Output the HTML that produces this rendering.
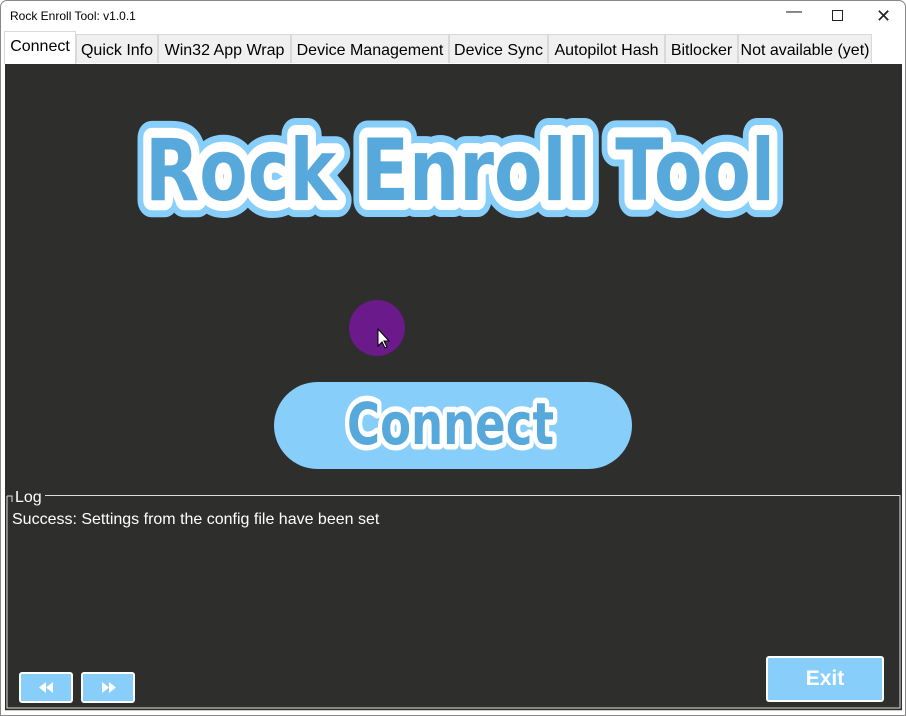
<!DOCTYPE html>
<html><head><style>
body{margin:0;width:906px;height:716px;background:#fff;font-family:"Liberation Sans",Arial,sans-serif;position:relative;overflow:hidden}
.win{position:absolute;left:0;top:0;width:904px;height:714px;border:1px solid #888;border-radius:7px 7px 0 0;background:#fff}
.title{position:absolute;left:9px;top:8px;font-size:12px;color:#000}
.ctl{position:absolute;top:4px;font-size:16px;color:#222}
.tabs{position:absolute;top:33px;left:0;height:31px;width:906px}
.tab{position:absolute;top:1px;height:29px;background:#f0f0f0;border:1px solid #d9d9d9;border-bottom:none;font-size:16px;line-height:31px;text-align:center;color:#000;box-sizing:border-box}
.tab.sel{background:#fff;top:-2px;height:33px;line-height:30px;border-color:#d9d9d9}
.main{position:absolute;left:5px;top:64px;width:897px;height:647px;background:#2e2e2d}
.btn{position:absolute;background:#87cefa;border:2px solid #fff;border-radius:3px;box-sizing:border-box}
</style></head><body>
<div class="win">
<div class="title">Rock Enroll Tool: v1.0.1</div>
<div class="ctl" style="left:785px;top:2px">—</div>
<div style="position:absolute;left:831px;top:9px;width:9px;height:9px;border:1px solid #222"></div>
<div class="ctl" style="left:875px;top:5px;font-size:18px">✕</div>
</div>
<div class="tabs">
<div class="tab" style="left:76px;width:82px">Quick Info</div>
<div class="tab" style="left:158px;width:133px">Win32 App Wrap</div>
<div class="tab" style="left:291px;width:158px">Device Management</div>
<div class="tab" style="left:449px;width:99px">Device Sync</div>
<div class="tab" style="left:548px;width:117px">Autopilot Hash</div>
<div class="tab" style="left:665px;width:73px">Bitlocker</div>
<div class="tab" style="left:738px;width:134px">Not available (yet)</div>
<div class="tab sel" style="left:4px;width:72px">Connect</div>
</div>
<div class="main"></div>
<svg style="position:absolute;left:0;top:0" width="906" height="716">
<g font-family="DejaVu Sans,sans-serif" font-weight="bold" font-size="86" stroke-linejoin="round">
<text x="145" y="200" textLength="630" lengthAdjust="spacingAndGlyphs" fill="#87cefa" stroke="#87cefa" stroke-width="34">Rock Enroll Tool</text>
<text x="145" y="200" textLength="630" lengthAdjust="spacingAndGlyphs" fill="#fff" stroke="#fff" stroke-width="20">Rock Enroll Tool</text>
<text x="145" y="200" textLength="630" lengthAdjust="spacingAndGlyphs" fill="#57a9dc">Rock Enroll Tool</text>
</g>
<circle cx="377" cy="328" r="28" fill="#6a1a8a"/>
<path d="M378 329 l0 17 l4 -4 l3 6 l2 -1 l-3 -6 l5 0 z" fill="#fff" stroke="#000" stroke-width="1"/>
<rect x="274" y="382" width="358" height="87" rx="43.5" fill="#87cefa"/>
<g font-family="DejaVu Sans,sans-serif" font-weight="bold" font-size="58" stroke-linejoin="round">
<text x="347" y="444" textLength="207" lengthAdjust="spacingAndGlyphs" fill="#fff" stroke="#fff" stroke-width="11">Connect</text>
<text x="347" y="444" textLength="207" lengthAdjust="spacingAndGlyphs" fill="#57a9dc">Connect</text>
</g>
<path d="M12 502 V496 H7 M45 495.5 H900 V708 H7 V496" fill="none" stroke="#ddd" stroke-width="1"/>
<line x1="5" y1="710.5" x2="902" y2="710.5" stroke="#ccc"/>
<text x="15" y="502" font-family="Liberation Sans,sans-serif" font-size="16" fill="#fff">Log</text>
<text x="12" y="524" font-family="Liberation Sans,sans-serif" font-size="16" fill="#fff">Success: Settings from the config file have been set</text>
</svg>
<div class="btn" style="left:19px;top:672px;width:54px;height:31px"><svg width="50" height="27"><path d="M25 8 v11 l-7 -5.5z M32 8 v11 l-7 -5.5z" fill="#fff"/></svg></div>
<div class="btn" style="left:81px;top:672px;width:54px;height:31px"><svg width="50" height="27"><path d="M19 8 v11 l7 -5.5z M26 8 v11 l7 -5.5z" fill="#fff"/></svg></div>
<div class="btn" style="left:766px;top:656px;width:118px;height:46px;color:#fff;font-weight:bold;font-size:21px;text-align:center;line-height:42px">Exit</div>
</body></html>
